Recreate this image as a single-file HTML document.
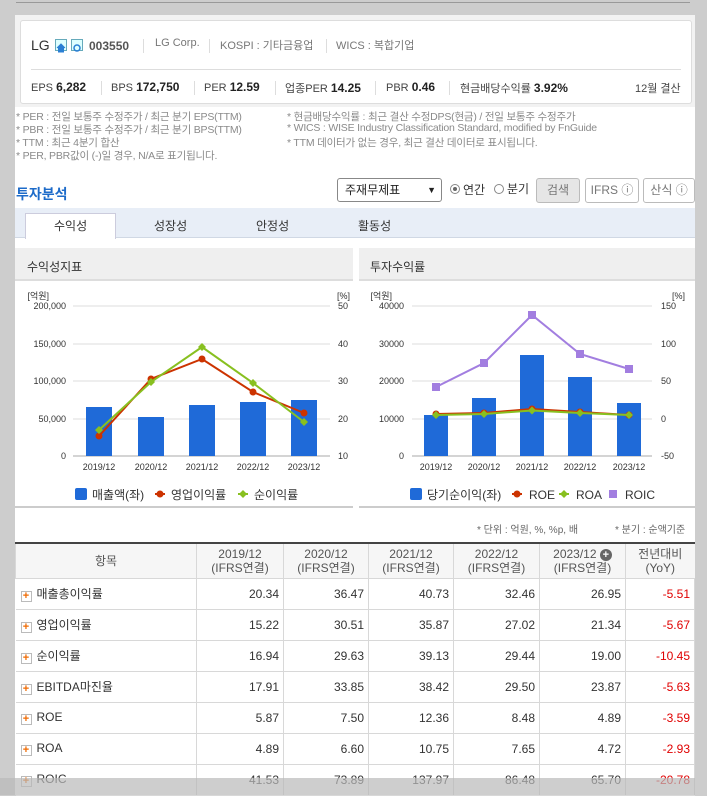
<!DOCTYPE html>
<html><head><meta charset="utf-8"><style>
*{margin:0;padding:0;box-sizing:border-box}
body{width:707px;height:795px;background:#cdcdcd;position:relative;overflow:hidden;font-family:"Liberation Sans","Noto Sans CJK KR",sans-serif;color:#333}
.abs{position:absolute}
#main{position:absolute;left:15px;top:15px;width:680px;height:780px;background:#fff}
.hb{position:absolute;left:20px;top:20px;width:672px;height:84px;border:1px solid #ddd;border-radius:3px;background:#fff}
.t{position:absolute;white-space:nowrap}
.note{font-size:10.5px;color:#8a8a8a;letter-spacing:-0.2px}
.sep{position:absolute;width:1px;height:14px;background:#ddd}
table{border-collapse:collapse;position:absolute;left:15px;top:542px;width:680px;font-size:12px}
td,th{border:1px solid #d8d8d8;height:31px;text-align:right;padding-right:4px;font-weight:normal;color:#333}
th{text-align:center;padding:0;height:35px;background:#f6f6f6;color:#555;line-height:14px}
tr:first-child th{border-top:2px solid #444}
td:first-child{text-align:left;padding-left:5px;border-left:none}
td.r{color:#e00000}
.pl{display:inline-block;width:11px;height:11px;border:1px solid #bbb;background:#fff;color:#f06a00;font-size:11px;line-height:9px;text-align:center;font-weight:bold;margin-right:5px;vertical-align:-1px}
.btn{position:absolute;top:178px;height:25px;border:1px solid #bbb;border-radius:3px;font-size:12px;color:#777;text-align:center;line-height:23px;background:#fff}
</style></head><body>
<div class="abs" style="left:16px;top:2px;width:674px;height:1px;background:#999"></div>
<div id="main"></div>
<div class="abs" style="left:15px;top:15px;width:680px;height:92px;background:#f2f2f2"></div>
<div class="hb">
 <div class="t" style="left:10px;top:16px;font-size:14px;color:#333">LG</div>
 <div class="abs" style="left:34px;top:18px;width:12px;height:12px;border:1px solid #6ab;background:#dff"><svg width="10" height="10"><path d="M1 5 L5 1 L9 5 M2.5 5 V9 H7.5 V5" fill="#2a7fd4" stroke="#2a7fd4"/></svg></div>
 <div class="abs" style="left:50px;top:18px;width:12px;height:12px;border:1px solid #6ab;background:#dff"><svg width="10" height="10"><circle cx="5" cy="5" r="3" fill="none" stroke="#2a7fd4" stroke-width="1.5"/></svg></div>
 <div class="t" style="left:68px;top:18px;font-size:12px;font-weight:bold;color:#555">003550</div>
 <div class="sep" style="left:122px;top:18px"></div>
 <div class="t" style="left:134px;top:16px;font-size:11px;color:#777">LG Corp.</div>
 <div class="sep" style="left:188px;top:18px"></div>
 <div class="t" style="left:199px;top:16px;font-size:11px;color:#777">KOSPI : 기타금융업</div>
 <div class="sep" style="left:305px;top:18px"></div>
 <div class="t" style="left:315px;top:16px;font-size:11px;color:#777">WICS : 복합기업</div>
 <div class="abs" style="left:10px;top:48px;width:650px;height:1px;background:#ddd"></div>
 <div class="t" style="left:10px;top:59px;font-size:11px;color:#444">EPS <b style="font-size:12px;color:#222">6,282</b></div>
 <div class="sep" style="left:80px;top:60px"></div>
 <div class="t" style="left:90px;top:59px;font-size:11px;color:#444">BPS <b style="font-size:12px;color:#222">172,750</b></div>
 <div class="sep" style="left:173px;top:60px"></div>
 <div class="t" style="left:183px;top:59px;font-size:11px;color:#444">PER <b style="font-size:12px;color:#222">12.59</b></div>
 <div class="sep" style="left:254px;top:60px"></div>
 <div class="t" style="left:264px;top:59px;font-size:11px;color:#444">업종PER <b style="font-size:12px;color:#222">14.25</b></div>
 <div class="sep" style="left:354px;top:60px"></div>
 <div class="t" style="left:365px;top:59px;font-size:11px;color:#444">PBR <b style="font-size:12px;color:#222">0.46</b></div>
 <div class="sep" style="left:428px;top:60px"></div>
 <div class="t" style="left:439px;top:59px;font-size:11px;color:#444">현금배당수익률 <b style="font-size:12px;color:#222">3.92%</b></div>
 <div class="t" style="left:614px;top:59px;font-size:11px;color:#444">12월 결산</div>
</div>
<div class="t note" style="left:16px;top:109px">* PER : 전일 보통주 수정주가 / 최근 분기 EPS(TTM)</div>
<div class="t note" style="left:16px;top:122px">* PBR : 전일 보통주 수정주가 / 최근 분기 BPS(TTM)</div>
<div class="t note" style="left:16px;top:135px">* TTM : 최근 4분기 합산</div>
<div class="t note" style="left:16px;top:148px">* PER, PBR값이 (-)일 경우, N/A로 표기됩니다.</div>
<div class="t note" style="left:287px;top:109px">* 현금배당수익률 : 최근 결산 수정DPS(현금) / 전일 보통주 수정주가</div>
<div class="t note" style="left:287px;top:122px">* WICS : WISE Industry Classification Standard, modified by FnGuide</div>
<div class="t note" style="left:287px;top:135px">* TTM 데이터가 없는 경우, 최근 결산 데이터로 표시됩니다.</div>
<div class="t" style="left:16px;top:184px;font-size:14px;font-weight:bold;color:#1d6bc9">투자분석</div>
<div class="abs" style="left:337px;top:178px;width:105px;height:24px;border:1px solid #888;border-radius:3px;font-size:12px;line-height:22px;padding-left:7px;color:#222">주재무제표<span style="position:absolute;right:5px;font-size:9px">▼</span></div>
<div class="abs" style="left:450px;top:184px;width:10px;height:10px;border:1px solid #888;border-radius:50%"><div style="margin:2px;width:4px;height:4px;border-radius:50%;background:#666"></div></div>
<div class="t" style="left:463px;top:181px;font-size:12px">연간</div>
<div class="abs" style="left:494px;top:184px;width:10px;height:10px;border:1px solid #888;border-radius:50%"></div>
<div class="t" style="left:507px;top:180px;font-size:12px">분기</div>
<div class="btn" style="left:536px;width:44px;background:#e6e6e6">검색</div>
<div class="btn" style="left:585px;width:54px">IFRS ⓘ</div>
<div class="btn" style="left:643px;width:52px">산식 ⓘ</div>
<div class="abs" style="left:15px;top:208px;width:680px;height:30px;background:#e8eef7;border-bottom:1px solid #d0d8e4"></div>
<div class="abs" style="left:25px;top:213px;width:91px;height:26px;background:#fff;border:1px solid #ccd;border-bottom:none"></div>
<div class="t" style="left:54px;top:217px;font-size:12px">수익성</div>
<div class="t" style="left:154px;top:217px;font-size:12px">성장성</div>
<div class="t" style="left:256px;top:217px;font-size:12px">안정성</div>
<div class="t" style="left:358px;top:217px;font-size:12px">활동성</div>
<div class="abs" style="left:15px;top:248px;width:338px;height:33px;background:#efefef;border-bottom:2px solid #ddd"></div>
<div class="t" style="left:27px;top:258px;font-size:12px">수익성지표</div>
<div class="abs" style="left:359px;top:248px;width:338px;height:33px;background:#efefef;border-bottom:2px solid #ddd"></div>
<div class="t" style="left:370px;top:258px;font-size:12px">투자수익률</div>
<div class="abs" style="left:15px;top:506px;width:338px;height:2px;background:#ccc"></div>
<div class="abs" style="left:359px;top:506px;width:338px;height:2px;background:#ccc"></div>
<svg class="abs" style="left:0;top:0" width="707" height="540" font-family="Liberation Sans, Noto Sans CJK KR, sans-serif" font-size="9" fill="#333">
<g stroke="#ddd"><line x1="73" x2="330" y1="306" y2="306"/><line x1="73" x2="330" y1="344" y2="344"/><line x1="73" x2="330" y1="381" y2="381"/><line x1="73" x2="330" y1="419" y2="419"/></g>
<line x1="73" x2="330" y1="456" y2="456" stroke="#aaa"/>
<g fill="#1f6ad8"><rect x="86" y="407" width="26" height="49"/><rect x="138" y="417" width="26" height="39"/><rect x="189" y="405" width="26" height="51"/><rect x="240" y="402" width="26" height="54"/><rect x="291" y="400" width="26" height="56"/></g>
<polyline points="99,436 151,379 202,359 253,392 304,413" fill="none" stroke="#cc3300" stroke-width="2"/>
<g fill="#cc3300"><circle cx="99" cy="436" r="3.5"/><circle cx="151" cy="379" r="3.5"/><circle cx="202" cy="359" r="3.5"/><circle cx="253" cy="392" r="3.5"/><circle cx="304" cy="413" r="3.5"/></g>
<polyline points="99,430 151,382 202,347 253,383 304,422" fill="none" stroke="#88c020" stroke-width="2"/>
<g fill="#88c020"><path d="M99 426l4 4-4 4-4-4z"/><path d="M151 378l4 4-4 4-4-4z"/><path d="M202 343l4 4-4 4-4-4z"/><path d="M253 379l4 4-4 4-4-4z"/><path d="M304 418l4 4-4 4-4-4z"/></g>
<g text-anchor="end"><text x="49" y="299">[억원]</text><text x="66" y="309">200,000</text><text x="66" y="347">150,000</text><text x="66" y="384">100,000</text><text x="66" y="422">50,000</text><text x="66" y="459">0</text></g>
<g><text x="337" y="299">[%]</text><text x="338" y="309">50</text><text x="338" y="347">40</text><text x="338" y="384">30</text><text x="338" y="422">20</text><text x="338" y="459">10</text></g>
<g text-anchor="middle"><text x="99" y="470">2019/12</text><text x="151" y="470">2020/12</text><text x="202" y="470">2021/12</text><text x="253" y="470">2022/12</text><text x="304" y="470">2023/12</text></g>
<g font-size="12"><rect x="75" y="488" width="12" height="12" rx="2" fill="#1f6ad8"/><text x="92" y="499">매출액(좌)</text>
<path d="M155 494h10" stroke="#cc3300" stroke-width="2"/><circle cx="160" cy="494" r="3.5" fill="#cc3300"/><text x="171" y="499">영업이익률</text>
<path d="M238 494h10" stroke="#88c020" stroke-width="2"/><path d="M243 490l4 4-4 4-4-4z" fill="#88c020"/><text x="254" y="499">순이익률</text></g>

<g stroke="#ddd"><line x1="412" x2="652" y1="306" y2="306"/><line x1="412" x2="652" y1="344" y2="344"/><line x1="412" x2="652" y1="381" y2="381"/><line x1="412" x2="652" y1="419" y2="419"/></g>
<line x1="412" x2="652" y1="456" y2="456" stroke="#aaa"/>
<g fill="#1f6ad8"><rect x="424" y="415" width="24" height="41"/><rect x="472" y="398" width="24" height="58"/><rect x="520" y="355" width="24" height="101"/><rect x="568" y="377" width="24" height="79"/><rect x="617" y="403" width="24" height="53"/></g>
<polyline points="436,387 484,363 532,315 580,354 629,369" fill="none" stroke="#a27ee0" stroke-width="2"/>
<g fill="#a27ee0"><rect x="432" y="383" width="8" height="8"/><rect x="480" y="359" width="8" height="8"/><rect x="528" y="311" width="8" height="8"/><rect x="576" y="350" width="8" height="8"/><rect x="625" y="365" width="8" height="8"/></g>
<polyline points="436,414 484,413 532,409 580,412 629,415" fill="none" stroke="#cc3300" stroke-width="2"/>
<g fill="#cc3300"><circle cx="436" cy="414" r="3.5"/><circle cx="484" cy="413" r="3.5"/><circle cx="532" cy="409" r="3.5"/><circle cx="580" cy="412" r="3.5"/><circle cx="629" cy="415" r="3.5"/></g>
<polyline points="436,415 484,414 532,410.5 580,413 629,415" fill="none" stroke="#88c020" stroke-width="2"/>
<g fill="#88c020"><path d="M436 411l4 4-4 4-4-4z"/><path d="M484 410l4 4-4 4-4-4z"/><path d="M532 406.5l4 4-4 4-4-4z"/><path d="M580 409l4 4-4 4-4-4z"/><path d="M629 411l4 4-4 4-4-4z"/></g>
<g text-anchor="end"><text x="392" y="299">[억원]</text><text x="404" y="309">40000</text><text x="404" y="347">30000</text><text x="404" y="384">20000</text><text x="404" y="422">10000</text><text x="404" y="459">0</text></g>
<g><text x="672" y="299">[%]</text><text x="661" y="309">150</text><text x="661" y="347">100</text><text x="661" y="384">50</text><text x="661" y="422">0</text><text x="661" y="459">-50</text></g>
<g text-anchor="middle"><text x="436" y="470">2019/12</text><text x="484" y="470">2020/12</text><text x="532" y="470">2021/12</text><text x="580" y="470">2022/12</text><text x="629" y="470">2023/12</text></g>
<g font-size="12"><rect x="410" y="488" width="12" height="12" rx="2" fill="#1f6ad8"/><text x="427" y="499">당기순이익(좌)</text>
<path d="M512 494h10" stroke="#cc3300" stroke-width="2"/><circle cx="517" cy="494" r="3.5" fill="#cc3300"/><text x="529" y="499">ROE</text>
<path d="M559 494h10" stroke="#88c020" stroke-width="2"/><path d="M564 490l4 4-4 4-4-4z" fill="#88c020"/><text x="576" y="499">ROA</text>
<rect x="609" y="490" width="8" height="8" fill="#a27ee0"/><text x="625" y="499">ROIC</text></g>
<g font-size="10" fill="#666"><text x="477" y="533">* 단위 : 억원, %, %p, 배</text><text x="615" y="533">* 분기 : 순액기준</text></g>
</svg>
<table>
<tr><th style="width:181px">항목</th><th style="width:87px">2019/12<br>(IFRS연결)</th><th style="width:85px">2020/12<br>(IFRS연결)</th><th style="width:85px">2021/12<br>(IFRS연결)</th><th style="width:86px">2022/12<br>(IFRS연결)</th><th style="width:86px">2023/12 <span style="display:inline-block;width:12px;height:12px;border-radius:50%;background:#666;color:#fff;font-size:11px;line-height:12px;font-weight:bold">+</span><br>(IFRS연결)</th><th style="border-right:none">전년대비<br>(YoY)</th></tr>
<tr><td><span class="pl">+</span>매출총이익률</td><td>20.34</td><td>36.47</td><td>40.73</td><td>32.46</td><td>26.95</td><td class="r">-5.51</td></tr>
<tr><td><span class="pl">+</span>영업이익률</td><td>15.22</td><td>30.51</td><td>35.87</td><td>27.02</td><td>21.34</td><td class="r">-5.67</td></tr>
<tr><td><span class="pl">+</span>순이익률</td><td>16.94</td><td>29.63</td><td>39.13</td><td>29.44</td><td>19.00</td><td class="r">-10.45</td></tr>
<tr><td><span class="pl">+</span>EBITDA마진율</td><td>17.91</td><td>33.85</td><td>38.42</td><td>29.50</td><td>23.87</td><td class="r">-5.63</td></tr>
<tr><td><span class="pl">+</span>ROE</td><td>5.87</td><td>7.50</td><td>12.36</td><td>8.48</td><td>4.89</td><td class="r">-3.59</td></tr>
<tr><td><span class="pl">+</span>ROA</td><td>4.89</td><td>6.60</td><td>10.75</td><td>7.65</td><td>4.72</td><td class="r">-2.93</td></tr>
<tr><td><span class="pl">+</span>ROIC</td><td>41.53</td><td>73.89</td><td>137.97</td><td>86.48</td><td>65.70</td><td class="r">-20.78</td></tr>
</table>
<div class="abs" style="left:0;top:778px;width:707px;height:17px;background:rgba(185,185,185,0.7)"></div>
<div class="abs" style="left:695px;top:0;width:12px;height:795px;background:#cdcdcd"></div>
</body></html>
